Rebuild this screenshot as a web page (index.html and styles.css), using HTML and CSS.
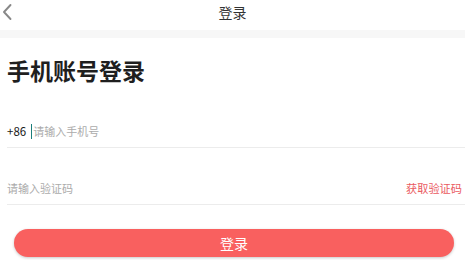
FILE: index.html
```html
<!DOCTYPE html>
<html lang="zh-CN">
<head>
<meta charset="utf-8">
<title>登录</title>
<link rel="stylesheet" href="styles.css">
</head>
<body>
<header class="topbar">
  <svg class="back" width="12" height="18" viewBox="0 0 12 18" aria-hidden="true">
    <path d="M9.5 2 L3 9 L9.5 16" fill="none" stroke="#888" stroke-width="1.9" stroke-linecap="round" stroke-linejoin="round"/>
  </svg>
  <span class="topbar-title">登录</span>
</header>
<div class="band"></div>
<main class="content">
  <h1 class="title">手机账号登录</h1>
  <div class="row row-phone">
    <span class="prefix">+86</span>
    <span class="cursor"></span>
    <span class="placeholder">请输入手机号</span>
  </div>
  <div class="row row-code">
    <span class="placeholder">请输入验证码</span>
    <span class="get-code">获取验证码</span>
  </div>
  <button class="login-btn">登录</button>
</main>
</body>
</html>
```

FILE: styles.css
```css
* { box-sizing: border-box; }
html, body { margin: 0; padding: 0; background: #fff; }
body {
  font-family: "Noto Sans CJK SC", "Noto Sans", sans-serif;
  color: #222;
  width: 465px;
  height: 260px;
  overflow: hidden;
}
.topbar {
  position: relative;
  height: 30px;
  display: flex;
  align-items: center;
  justify-content: center;
}
.back {
  position: absolute;
  left: 1px;
  top: 3px;
}
.topbar-title {
  font-size: 14px;
  color: #333;
  line-height: 1;
  margin-top: -6px;
}
.band {
  height: 8px;
  background: #f7f7f7;
}
.content {
  padding: 0 0 0 7px;
}
.title {
  margin: 19px 0 0 0;
  font-size: 23px;
  line-height: 27px;
  font-weight: 700;
  color: #1f1f1f;
}
.row {
  height: 33px;
  display: flex;
  align-items: center;
  border-bottom: 1px solid #ececec;
  padding-right: 3px;
}
.row-phone { margin-top: 31px; }
.row-code { margin-top: 24px; justify-content: space-between; }
.prefix {
  font-size: 11.5px;
  color: #1a1a1a;
}
.cursor {
  width: 1px;
  height: 15px;
  background: #1c7e7a;
  margin: 0 1px 0 5px;
}
.placeholder {
  font-size: 11px;
  color: #ababab;
}
.get-code {
  font-size: 11.2px;
  color: #ea5a5f;
}
.login-btn {
  display: block;
  margin: 24px 0 0 7px;
  width: 440px;
  height: 28px;
  border: none;
  border-radius: 14px;
  background: #f9605f;
  box-shadow: 0 1px 3px rgba(0,0,0,0.22);
  color: #fff;
  font-family: "Noto Sans CJK SC", "Noto Sans", sans-serif;
  font-size: 14px;
  padding: 0;
}
```
